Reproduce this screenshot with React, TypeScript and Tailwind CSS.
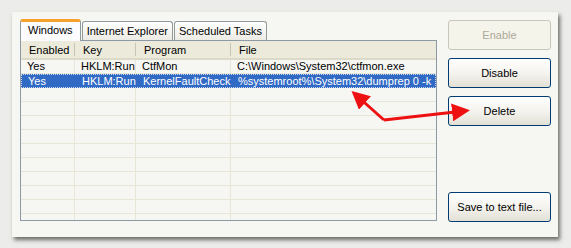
const FONT = "font-['Liberation_Sans',Arial,sans-serif] text-[11px] leading-none";

const COLS = [
  { label: "Enabled", w: "w-[54px]" },
  { label: "Key", w: "w-[61px]" },
  { label: "Program", w: "w-[95px]" },
  { label: "File", w: "flex-1" },
];

const ROWS = [
  ["Yes", "HKLM:Run", "CtfMon", "C:\\Windows\\System32\\ctfmon.exe"],
  ["Yes", "HKLM:Run", "KernelFaultCheck", "%systemroot%\\System32\\dumprep 0 -k"],
];

function Tab({ label, active }: { label: string; active?: boolean }) {
  if (active) {
    return (
      <div className="relative z-10 -mb-px flex h-[22px] items-center rounded-t-[3px] border-x border-t-[3px] border-x-[#919b9c] border-t-[#f6a12c] bg-[#fcfcfe] px-[7px] pb-[2px]">
        {label}
      </div>
    );
  }
  return (
    <div className="mt-[2px] flex h-[19px] items-center rounded-t-[3px] border-x border-t border-[#919b9c] bg-gradient-to-b from-[#ffffff] to-[#ecebe5] px-[4px] pt-[1px]">
      {label}
    </div>
  );
}

function XpButton({ label, disabled }: { label: string; disabled?: boolean }) {
  return (
    <div
      className={
        disabled
          ? "flex h-[30px] w-[103px] items-center justify-center rounded-[3px] border border-[#c9c7ba] bg-[#f5f4ea] text-[#aca899]"
          : "flex h-[30px] w-[103px] items-center justify-center rounded-[3px] border border-[#003c74] bg-gradient-to-b from-[#ffffff] via-[#f4f3ee] to-[#e3e1d6] text-black"
      }
    >
      {label}
    </div>
  );
}

export default function App() {
  const empty = Array.from({ length: 10 });
  return (
    <div className={`relative h-[248px] w-[571px] overflow-hidden bg-[#ececea] pl-[12px] pt-[12px] ${FONT}`}>
      <div className="flex h-[225px] w-[546px] bg-[#f6f6f3] shadow-[2px_3px_4px_rgba(0,0,0,0.55)]">
        <div className="flex flex-col pl-[8px] pt-[7px]">
          <div className="flex h-[21px] items-end gap-px text-black">
            <Tab label="Windows" active />
            <Tab label="Internet Explorer" />
            <Tab label="Scheduled Tasks" />
          </div>
          <div className="flex h-[181px] w-[417px] flex-col overflow-hidden border border-[#8d99a6] bg-[#f6f6f3]">
            <div className="flex h-[19px] shrink-0 border-b-2 border-[#dcd9c9] bg-[#ebeadb]">
              {COLS.map((c, i) => (
                <div key={c.label} className={`flex items-center ${c.w} ${i < 3 ? "border-r border-[#c7c5b2]" : ""} my-[2px] pl-[8px] pt-px`}>
                  {c.label}
                </div>
              ))}
            </div>
            {ROWS.map((r, ri) => (
              <div
                key={ri}
                className={
                  ri === 1
                    ? "flex h-[14px] shrink-0 border border-dotted border-[#c9d8f0] bg-[#316ac5] text-white"
                    : "flex h-[14px] shrink-0 border-b border-[#e8e6d6] text-black"
                }
              >
                {r.map((cell, ci) => (
                  <div key={ci} className={`flex items-center ${COLS[ci].w} ${ci < 3 && ri !== 1 ? "border-r border-[#e8e6d6]" : ""} pl-[6px] whitespace-nowrap`}>
                    {cell}
                  </div>
                ))}
              </div>
            ))}
            {empty.map((_, i) => (
              <div key={i} className="flex h-[14px] shrink-0 border-b border-[#e8e6d6]">
                {COLS.map((c, ci) => (
                  <div key={ci} className={`${c.w} ${ci < 3 ? "border-r border-[#e8e6d6]" : ""}`} />
                ))}
              </div>
            ))}
          </div>
        </div>
        <div className="ml-[11px] flex flex-col gap-[8px] pb-[15px] pt-[8px]">
          <XpButton label="Enable" disabled />
          <XpButton label="Disable" />
          <XpButton label="Delete" />
          <div className="mt-auto">
            <XpButton label="Save to text file..." />
          </div>
        </div>
      </div>
      <svg className="pointer-events-none absolute left-0 top-0" width="571" height="248">
        <defs>
          <marker id="ah" markerWidth="6" markerHeight="6" refX="4" refY="3" orient="auto" markerUnits="strokeWidth">
            <path d="M0,0 L6,3 L0,6 z" fill="#ee1111" />
          </marker>
        </defs>
        <path d="M384,120 L356,95" stroke="#ee1111" strokeWidth="3" fill="none" markerEnd="url(#ah)" />
        <path d="M384,120 L464,111" stroke="#ee1111" strokeWidth="3" fill="none" markerEnd="url(#ah)" />
      </svg>
    </div>
  );
}
